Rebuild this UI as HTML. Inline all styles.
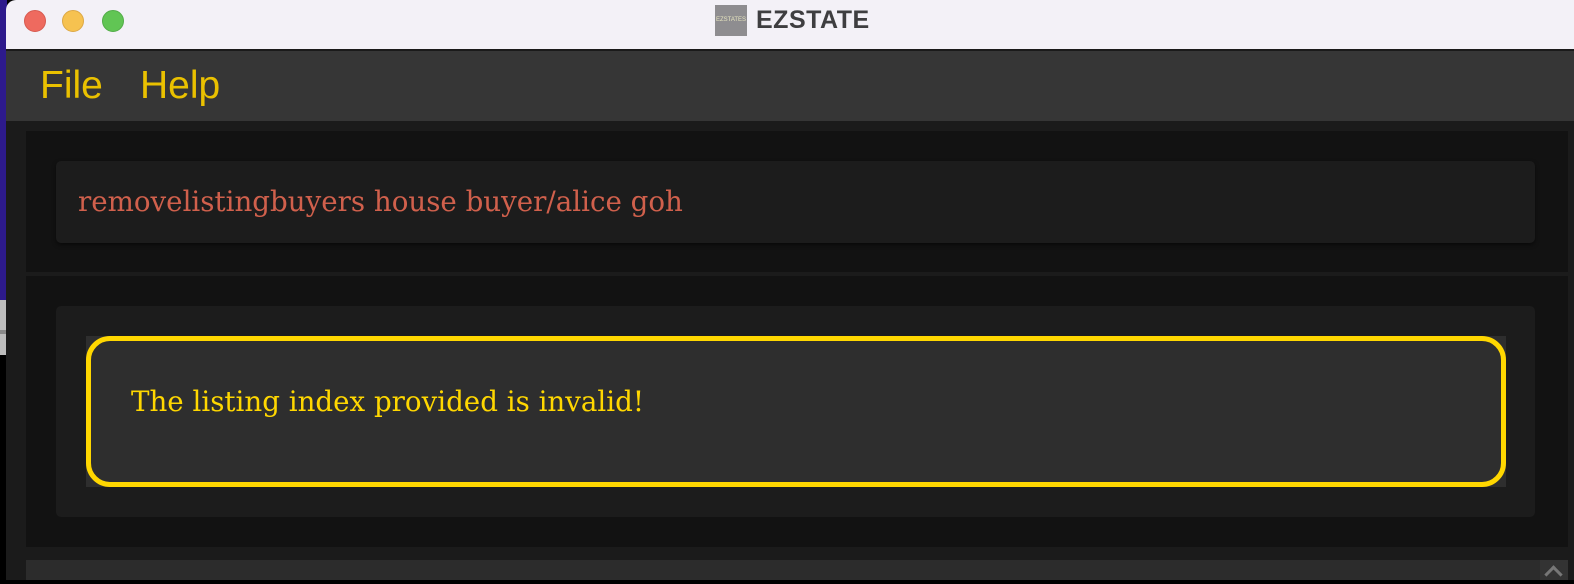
<!DOCTYPE html>
<html><head><style>
body{margin:0;width:1574px;height:580px;overflow:hidden;background:#000;position:relative;font-family:"Liberation Sans",sans-serif}
.a{position:absolute}
</style></head><body>
<div class="a" style="left:0;top:0;width:7px;height:300px;background:#2d1a8c"></div>
<div class="a" style="left:0;top:300px;width:7px;height:55px;background:#bdbdbd"></div>
<div class="a" style="left:0;top:330px;width:7px;height:4px;background:#8a8a8a"></div>
<div class="a" style="left:6px;top:0;width:1568px;height:49px;background:#f3f1f7;border-top-left-radius:10px"></div>
<div class="a" style="left:24px;top:10px;width:22px;height:22px;border-radius:50%;background:#ee6a5f;box-sizing:border-box;border:1px solid #d65a50"></div>
<div class="a" style="left:62px;top:10px;width:22px;height:22px;border-radius:50%;background:#f6c250;box-sizing:border-box;border:1px solid #dca845"></div>
<div class="a" style="left:102px;top:10px;width:22px;height:22px;border-radius:50%;background:#61c554;box-sizing:border-box;border:1px solid #52ac48"></div>
<div class="a" style="left:715px;top:5px;width:32px;height:31px;background:#8e8d90;color:#e8e6c0;font-size:6px;line-height:31px;text-align:center">EZSTATES</div>
<div class="a" style="left:756px;top:5px;font-size:25px;font-weight:bold;color:#3e3e40;line-height:30px;letter-spacing:0.5px">EZSTATE</div>
<div class="a" style="left:6px;top:49px;width:1568px;height:2px;background:#1a1a1a"></div>
<div class="a" style="left:6px;top:51px;width:1568px;height:70px;background:#363636"></div>
<div class="a" style="left:40px;top:64px;font-size:39px;color:#eac100;line-height:44px">File</div>
<div class="a" style="left:140px;top:64px;font-size:39px;color:#eac100;line-height:44px">Help</div>
<div class="a" style="left:6px;top:121px;width:1568px;height:459px;background:#1b1b1b"></div>
<div class="a" style="left:26px;top:131px;width:1542px;height:141px;background:#121212"></div>
<div class="a" style="left:56px;top:161px;width:1479px;height:82px;background:#1c1c1c;border-radius:5px;box-shadow:0 2px 4px rgba(0,0,0,.5)"></div>
<div class="a" style="left:78px;top:182px;font-family:'DejaVu Serif',serif;font-size:27.7px;color:#d0604c;line-height:40px">removelistingbuyers house buyer/alice goh</div>
<div class="a" style="left:26px;top:276px;width:1542px;height:271px;background:#121212"></div>
<div class="a" style="left:56px;top:306px;width:1479px;height:211px;background:#1c1c1c;border-radius:5px"></div>
<div class="a" style="left:86px;top:336px;width:1420px;height:151px;background:#2e2e2e"></div>
<div class="a" style="left:86px;top:336px;width:1420px;height:151px;box-sizing:border-box;border:5px solid #ffd700;border-radius:24px;background:#2e2e2e"></div>
<div class="a" style="left:131px;top:382px;font-family:'DejaVu Serif',serif;font-size:27.7px;color:#ffd700;line-height:40px">The listing index provided is invalid!</div>
<div class="a" style="left:26px;top:560px;width:1542px;height:20px;background:#2c2c2c"></div>
<div class="a" style="left:1540px;top:560px;width:28px;height:20px;background:#333"></div>
<div class="a" style="left:1547px;top:568px;width:10px;height:10px;border-left:3px solid #777;border-top:3px solid #777;transform:rotate(45deg)"></div>
</body></html>
